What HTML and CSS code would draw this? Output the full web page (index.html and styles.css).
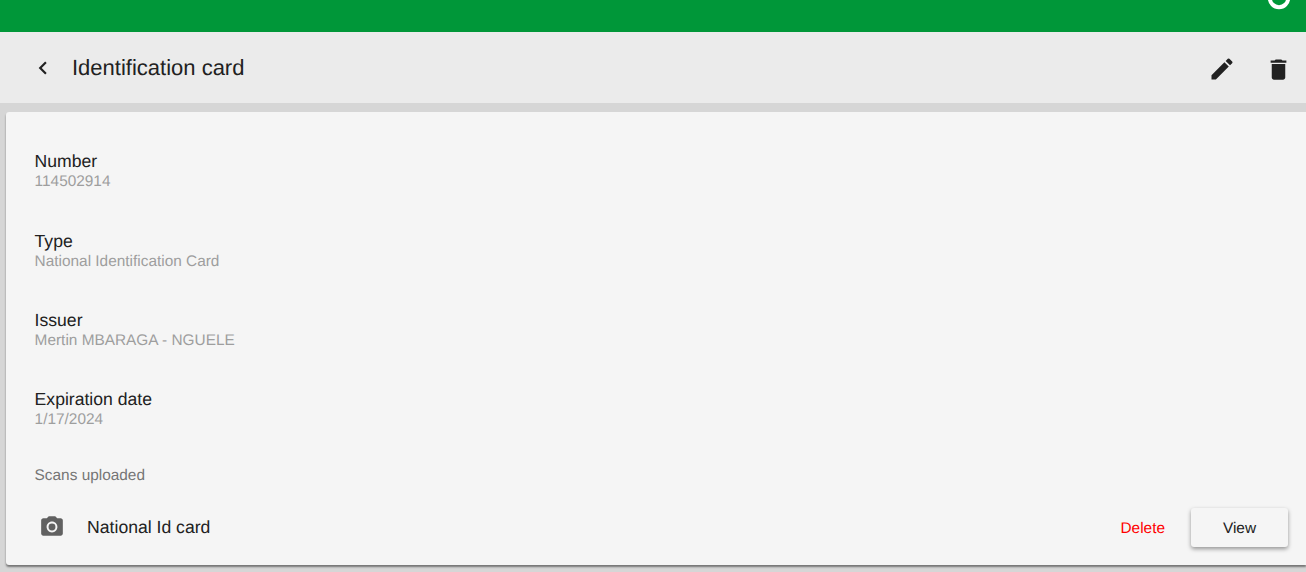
FILE: index.html
```html
<!DOCTYPE html>
<html>
<head>
  <title>Identification card</title>
  <link rel="stylesheet" href="styles.css">
</head>
<body>
  <header class="topbar">
    <svg class="account" viewBox="0 0 24 24" width="24" height="24">
      <circle cx="12" cy="12" r="9.2" fill="none" stroke="#fff" stroke-width="4"/>
    </svg>
  </header>

  <div class="subbar">
    <button class="icon-btn back">
      <svg viewBox="0 0 24 24" width="26" height="26"><path fill="#212121" d="M15.41 7.41L14 6l-6 6 6 6 1.41-1.41L10.83 12z"/></svg>
    </button>
    <h1 class="page-title">Identification card</h1>
    <button class="icon-btn edit">
      <svg viewBox="0 0 24 24" width="28" height="28"><path fill="#212121" d="M3 17.25V21h3.75L17.81 9.94l-3.75-3.75L3 17.25zM20.71 7.04a1 1 0 0 0 0-1.41l-2.34-2.34a1 1 0 0 0-1.41 0l-1.83 1.83 3.75 3.75 1.83-1.83z"/></svg>
    </button>
    <button class="icon-btn trash">
      <svg viewBox="0 0 24 24" width="27" height="27"><path fill="#212121" d="M6 19c0 1.1.9 2 2 2h8c1.1 0 2-.9 2-2V7H6v12zM19 4h-3.5l-1-1h-5l-1 1H5v2h14V4z"/></svg>
    </button>
  </div>

  <main class="card">
    <div class="field">
      <div class="field-label">Number</div>
      <div class="field-value">114502914</div>
    </div>
    <div class="field">
      <div class="field-label">Type</div>
      <div class="field-value">National Identification Card</div>
    </div>
    <div class="field">
      <div class="field-label">Issuer</div>
      <div class="field-value">Mertin MBARAGA - NGUELE</div>
    </div>
    <div class="field">
      <div class="field-label">Expiration date</div>
      <div class="field-value">1/17/2024</div>
    </div>

    <div class="scans-title">Scans uploaded</div>
    <div class="scan-row">
      <svg class="camera" viewBox="0 0 24 24" width="26" height="26">
        <circle fill="#616161" cx="12" cy="12" r="3.2"/>
        <path fill="#616161" d="M9 2L7.17 4H4c-1.1 0-2 .9-2 2v12c0 1.1.9 2 2 2h16c1.1 0 2-.9 2-2V6c0-1.1-.9-2-2-2h-3.17L15 2H9zm3 15c-2.76 0-5-2.24-5-5s2.24-5 5-5 5 2.24 5 5-2.24 5-5 5z"/>
      </svg>
      <span class="scan-name">National Id card</span>
      <button class="delete-btn">Delete</button>
      <button class="view-btn">View</button>
    </div>
  </main>
</body>
</html>
```

FILE: styles.css
```css
body {
  margin: 0;
  height: 572px;
  overflow: hidden;
  background: #d6d6d6;
  color: #212121;
  font-family: "Liberation Sans", Arial, sans-serif;
  text-rendering: geometricPrecision;
}
button {
  font-family: inherit;
  text-rendering: inherit;
  border: none;
  background: none;
  padding: 0;
  cursor: pointer;
}
.topbar {
  height: 32px;
  background: #009739;
  display: flex;
  justify-content: flex-end;
  align-items: flex-end;
  overflow: hidden;
  padding-right: 15px;
}
.account {
  flex: none;
  margin-bottom: 22px;
}
.subbar {
  height: 71px;
  background: #ebebeb;
  display: flex;
  align-items: center;
  padding-left: 30px;
  padding-right: 14px;
}
.icon-btn {
  display: flex;
  align-items: center;
  justify-content: center;
}
.back {
  padding-top: 1px;
}
.page-title {
  margin: 0 0 0 16px;
  flex: 1;
  font-size: 22px;
  font-weight: 400;
  color: #212121;
}
.edit {
  margin-right: 29.5px;
  padding-top: 3px;
}
.trash {
  padding-top: 3px;
}
.card {
  margin: 9px 0 0 6px;
  height: 453px;
  box-sizing: border-box;
  background: #f5f5f5;
  border-radius: 3px 0 0 3px;
  box-shadow: 0 2px 2px rgba(0, 0, 0, 0.45);
  padding: 37.4px 18px 0 28.6px;
}
.field {
  height: 79.3px;
}
.field-label {
  font-size: 17.6px;
  line-height: 24px;
  color: #212121;
}
.field-value {
  font-size: 15.4px;
  line-height: 18px;
  color: #9e9e9e;
}
.scans-title {
  margin-top: -0.4px;
  font-size: 15.4px;
  line-height: 20px;
  color: #757575;
}
.scan-row {
  display: flex;
  align-items: center;
  margin-top: 22px;
  height: 39px;
}
.camera {
  margin-left: 4px;
  margin-bottom: 2px;
  flex: none;
}
.scan-name {
  flex: 1;
  margin-left: 22.5px;
  font-size: 17.6px;
  color: #212121;
}
.delete-btn {
  font-size: 15.4px;
  color: #f00;
  margin-right: 26px;
  padding-top: 2px;
}
.view-btn {
  width: 97px;
  height: 39px;
  padding-top: 2px;
  font-size: 15.4px;
  color: #212121;
  background: #f5f5f5;
  border-radius: 3px;
  box-shadow: 0 2px 4px rgba(0, 0, 0, 0.4);
}
```
